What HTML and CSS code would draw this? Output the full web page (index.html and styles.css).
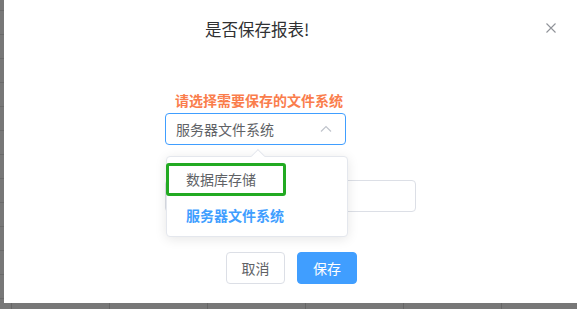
FILE: index.html
```html
<!doctype html>
<html lang="zh-CN">
<head>
	<meta charset="UTF-8">
	<title>保存报表</title>
	<link rel="stylesheet" href="styles.css">
</head>
<body>
	<div class="page">
		<div class="dialog">
			<div class="dialog-head">
				<span class="dialog-title">是否保存报表!</span>
				<a class="dialog-close" href="javascript:;">
					<svg width="10" height="10" viewBox="0 0 10 10"><path d="M0.5 0.5L9.5 9.5M9.5 0.5L0.5 9.5" stroke="#909399" stroke-width="1.1" fill="none"/></svg>
				</a>
			</div>
			<div class="dialog-body">
				<div class="tip">请选择需要保存的文件系统</div>
				<div class="select">
					<span>服务器文件系统</span>
					<svg width="12" height="8" viewBox="0 0 12 8"><path d="M1 6.5L6 1.5L11 6.5" stroke="#c0c4cc" stroke-width="1.2" fill="none"/></svg>
				</div>
				<div class="input"></div>
			</div>
			<div class="dialog-foot">
				<a class="btn" href="javascript:;">取消</a>
				<a class="btn btn-primary" href="javascript:;">保存</a>
			</div>

			<div class="dropdown">
				<span class="dropdown-arrow"></span>
				<ul>
					<li class="hover">数据库存储</li>
					<li class="selected">服务器文件系统</li>
				</ul>
			</div>
		</div>
	</div>
</body>
</html>
```

FILE: styles.css
```css
body,ul,li,a{
	margin:0;
	padding:0;
	list-style:none;
	text-decoration:none;
}
*{
	box-sizing:border-box;
}
body{
	font-family:"Noto Sans CJK SC","Noto Sans",sans-serif;
	color:#606266;
}
.page{
	position:relative;
	width:577px;
	height:309px;
	overflow:hidden;
	background-color:#777;
	background-image:
		repeating-linear-gradient(to bottom,transparent 0,transparent 10px,#6a6a6a 10px,#6a6a6a 11px,transparent 11px,transparent 24px),
		repeating-linear-gradient(to right,transparent 0,transparent 11px,#666 11px,#666 12px,transparent 12px,transparent 98px);
}
.dialog{
	position:absolute;
	left:4px;
	top:0;
	width:586px;
	height:303px;
	background:#fff;
}
.dialog-head{
	height:56px;
	padding:17px 0 0 201px;
}
.dialog-title{
	font-size:16.5px;
	line-height:24px;
	color:#303133;
}
.dialog-close{
	position:absolute;
	left:542px;
	top:23px;
	line-height:0;
}
.dialog-body{
	padding:34px 0 0 161px;
}
.tip{
	font-size:14px;
	font-weight:bold;
	line-height:20px;
	color:#fa7d4c;
	padding-left:10px;
}
.select{
	display:flex;
	align-items:center;
	justify-content:space-between;
	width:181px;
	height:32px;
	margin-top:3px;
	padding:0 13px 0 10px;
	border:1px solid #409eff;
	border-radius:4px;
	font-size:14px;
	color:#606266;
}
.input{
	width:251px;
	height:32px;
	margin-top:35px;
	border:1px solid #dcdfe6;
	border-radius:4px;
}
.dialog-foot{
	display:flex;
	gap:12px;
	padding:40px 0 0 222px;
}
.btn{
	display:flex;
	align-items:center;
	justify-content:center;
	width:59px;
	height:32px;
	border:1px solid #dcdfe6;
	border-radius:4px;
	font-size:14px;
	color:#606266;
	background:#fff;
}
.btn-primary{
	width:60px;
	background:#409eff;
	border-color:#409eff;
	color:#fff;
}
.dropdown{
	position:absolute;
	left:162px;
	top:156px;
	width:182px;
	height:81px;
	background:#fff;
	border:1px solid #e4e7ed;
	border-radius:4px;
	box-shadow:0 2px 12px rgba(0,0,0,.1);
}
.dropdown-arrow{
	position:absolute;
	left:86px;
	top:-6px;
	width:10px;
	height:10px;
	background:#fff;
	border-left:1px solid #e4e7ed;
	border-top:1px solid #e4e7ed;
	transform:rotate(45deg);
}
.dropdown ul{
	position:relative;
	padding-top:6px;
}
.dropdown li{
	height:34px;
	line-height:30px;
	padding-left:19px;
	font-size:14px;
	color:#606266;
}
.dropdown li.hover{
	width:120px;
	margin-left:-1px;
	padding-left:17px;
	border:3px solid #22aa22;
	border-radius:3px;
	height:33px;
	line-height:27px;
}
.dropdown li.selected{
	color:#409eff;
	font-weight:bold;
	line-height:38px;
}
```
